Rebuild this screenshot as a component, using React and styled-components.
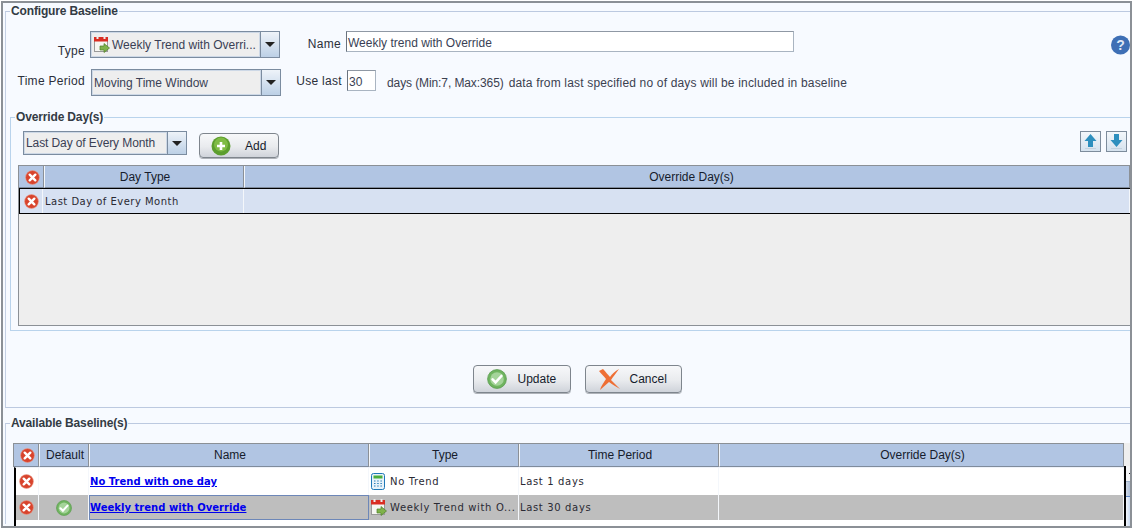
import React from "react";
import styled, { createGlobalStyle } from "styled-components";

const Global = createGlobalStyle`
  html, body { margin: 0; padding: 0; background: #fff; overflow: hidden; }
  * { box-sizing: border-box; }
`;

const Page = styled.div`
  width: 1133px;
  height: 528px;
  padding: 1px 1px 0 1px;
  font-family: "Liberation Sans", Arial, sans-serif;
  font-size: 12px;
  color: #2b2f3a;
`;

const Win = styled.div`
  height: 527px;
  border: 2px solid #8b9096;
  background: #f7faff;
  display: flex;
  flex-direction: column;
  padding: 1px 0 0 2px;
  overflow: hidden;
`;

const Group = styled.fieldset`
  margin: ${(p) => p.$mt || 0}px 0 0;
  padding: 0;
  min-width: 0;
  border: 0;
  border-top: 1px solid #bcc9e0;
  border-left: 1px solid #c4d0e4;
  border-bottom: ${(p) => (p.$closed ? "1px solid #bcc9e0" : "0")};
  height: ${(p) => p.$h}px;
  flex: none;
`;

const Legend = styled.legend`
  margin-left: 4px;
  padding: 0 1px;
  font-weight: bold;
  font-size: 12px;
  line-height: 14px;
  letter-spacing: -0.15px;
  color: #333b44;
`;

const InnerGroup = styled.fieldset`
  margin: 0 0 0 4px;
  padding: 0;
  min-width: 0;
  border: 1px solid #b9d3ec;
  border-right: 0;
  height: 221px;
  flex: none;
`;

const Row = styled.div`
  display: flex;
  align-items: flex-start;
  height: ${(p) => p.$h}px;
  margin-top: ${(p) => p.$mt || 0}px;
`;

const Label = styled.span`
  flex: none;
  width: ${(p) => p.$w}px;
  margin-top: ${(p) => p.$top || 0}px;
  margin-right: ${(p) => p.$mr || 0}px;
  text-align: right;
  line-height: 14px;
  letter-spacing: 0.3px;
  white-space: nowrap;
`;

const Combo = styled.div`
  flex: none;
  display: flex;
  width: ${(p) => p.$w}px;
  height: ${(p) => p.$h}px;
  margin-left: ${(p) => p.$ml || 0}px;
  border: 1px solid #7b8ca0;
  background: #eeeeee;
`;

const ComboText = styled.div`
  flex: 1;
  min-width: 0;
  display: flex;
  align-items: center;
  gap: ${(p) => p.$gap || 0}px;
  padding-left: ${(p) => p.$pl || 1}px;
  border: 1px solid #cdd8e6;
  white-space: nowrap;
  overflow: hidden;
  letter-spacing: ${(p) => p.$ls || 0}px;
  color: #3a3f55;
`;

const ComboArrow = styled.div`
  flex: none;
  width: 19px;
  display: flex;
  align-items: center;
  justify-content: center;
  border-left: 1px solid #7b8ca0;
  background: linear-gradient(#eef3f9, #bcd0e6);
  &::after {
    content: "";
    border-left: 5px solid transparent;
    border-right: 5px solid transparent;
    border-top: 5px solid #222;
  }
`;

const TextBox = styled.div`
  flex: none;
  width: ${(p) => p.$w}px;
  height: 21px;
  margin-top: ${(p) => p.$mt || 0}px;
  padding: 0 1px;
  border: 1px solid #a9b4c1;
  border-left-color: #69727e;
  border-top-color: #8f98a4;
  background: #fff;
  line-height: 22px;
  color: #3a3f55;
  white-space: nowrap;
`;

const Hint = styled.span`
  flex: none;
  margin-left: ${(p) => p.$ml}px;
  margin-top: 7px;
  line-height: 14px;
  letter-spacing: ${(p) => p.$ls || 0}px;
  color: #3b4150;
  white-space: nowrap;
`;

const Spacer = styled.div`
  flex: 1;
`;

const Toolbar = styled.div`
  display: flex;
  align-items: flex-start;
  height: 41px;
  padding: 7px 3px 0 12px;
`;

const Raised = styled.div`
  flex: none;
  display: flex;
  align-items: center;
  width: ${(p) => p.$w}px;
  height: ${(p) => p.$h}px;
  margin-left: ${(p) => p.$ml || 0}px;
  margin-top: ${(p) => p.$mt || 0}px;
  padding-left: ${(p) => p.$pl}px;
  gap: ${(p) => p.$gap}px;
  border: 1px solid #7e858d;
  border-radius: 4px;
  background: linear-gradient(#f7f8fa, #e9ebee 55%, #cfd3da);
  box-shadow: 0 1px 0 #aeb2b8;
  color: #161c2c;
  line-height: 14px;
`;

const IconBtn = styled.div`
  flex: none;
  width: 21px;
  height: 21px;
  margin-left: ${(p) => p.$ml || 0}px;
  border: 1px solid #7d8c9c;
  background: linear-gradient(#f3f7fb, #d5e2ee);
  display: flex;
  align-items: center;
  justify-content: center;
`;

const Table = styled.div`
  flex: none;
  height: ${(p) => p.$h}px;
  margin-left: ${(p) => p.$ml}px;
  border-top: 1px solid #8b9096;
  background: ${(p) => p.$bg};
  border-bottom: ${(p) => (p.$bb ? "1px solid #8b9096" : "0")};
  border-left: 1px solid #8b9096;
  overflow: hidden;
`;

const Tr = styled.div`
  display: grid;
  grid-template-columns: ${(p) => p.$cols};
  height: ${(p) => p.$h}px;
  background: ${(p) => p.$bg || "transparent"};
`;

const HeadCell = styled.div`
  display: flex;
  align-items: center;
  justify-content: center;
  min-width: 0;
  padding-left: ${(p) => p.$pl ?? 2}px;
  padding-top: ${(p) => p.$pt || 0}px;
  background: #b1c5e3;
  border-right: 1px solid #8b9096;
  border-left: 1px solid #f4f7fb;
  border-bottom: 1px solid #7f8b9c;
  color: #161c2c;
  white-space: nowrap;
  &:first-child { border-left: 0; }
`;

const SelRow = styled.div`
  display: grid;
  grid-template-columns: 23px 201px 1fr;
  height: 26px;
  border: solid #000;
  border-width: 1px 0 1px 1px;
  background: #d7e1f2;
`;

const Cell = styled.div`
  display: flex;
  align-items: center;
  justify-content: ${(p) => (p.$center ? "center" : "flex-start")};
  gap: ${(p) => p.$gap ?? 3}px;
  min-width: 0;
  padding-left: ${(p) => p.$pl || 0}px;
  padding-right: ${(p) => p.$pr || 0}px;
  font-family: "DejaVu Sans", Verdana, sans-serif;
  font-size: 10px;
  letter-spacing: ${(p) => p.$ls ?? 0.65}px;
  color: #2a2a33;
  white-space: nowrap;
  overflow: hidden;
  border-right: 1px solid #f4f7fb;
`;

const LinkCell = styled(Cell)`
  letter-spacing: 0.03px;
  border: ${(p) => (p.$focus ? "1px solid #6d87b8" : "0")};
  border-right: 1px solid ${(p) => (p.$focus ? "#6d87b8" : "#f4f7fb")};
`;

const TLink = styled.a`
  color: #0000ee;
  font-weight: bold;
  text-decoration: underline;
`;

const ButtonBar = styled.div`
  display: flex;
  justify-content: center;
  gap: 14px;
  padding: 34px 0 0 18px;
`;

const Bottom = styled.div`
  display: flex;
  height: 84px;
  margin: 13px 0 0 7px;
`;

const BottomMain = styled.div`
  width: 1111px;
  flex: none;
`;

const Rows = styled.div`
  margin-left: 1px;
  border-left: 2px solid #000;
  border-top: 1px solid #eef2f9;
  height: 59px;
  background: #fff;
`;

const ScrollColumn = styled.div`
  flex: none;
  width: 6px;
  height: 84px;
  padding-top: 23px;
  background: #eeeeee;
`;

const ScrollBody = styled.div`
  height: 60px;
  border-left: 2px solid #000;
  background: linear-gradient(90deg, #f2f5fa, #c9daf2);
`;

const ScrollButton = styled.div`
  height: 15px;
  background: #f4f5f7;
  position: relative;
  &::after {
    content: "";
    position: absolute;
    right: 0;
    top: 7px;
    width: 1px;
    height: 1px;
    background: #222;
  }
`;

const ScrollThumb = styled.div`
  height: 16px;
  background: linear-gradient(90deg, #cfd8e6, #aebfd8);
  border-top: 1px solid #9db0c9;
  border-bottom: 1px solid #5f86c4;
`;

const CloseIcon = () => (
  <svg width="15" height="15" viewBox="0 0 16 16">
    <circle cx="8" cy="8" r="7.4" fill="#d8432c" stroke="#eda08f" strokeWidth=".6" />
    <path d="M5 5l6 6M11 5l-6 6" stroke="#fff" strokeWidth="2.6" strokeLinecap="round" />
  </svg>
);

const CheckIcon = ({ s = 16 }) => (
  <svg width={s} height={s} viewBox="0 0 20 20">
    <circle cx="10" cy="10" r="9.4" fill="#6fb45f" stroke="#5b9c50" strokeWidth=".8" />
    <circle cx="10" cy="10" r="6.8" fill="#a5d49a" />
    <path d="M5.6 10.4l3 3 5.8-6.4" fill="none" stroke="#fff" strokeWidth="2.6" strokeLinecap="round" />
  </svg>
);

const PlusIcon = () => (
  <svg width="20" height="20" viewBox="0 0 20 20">
    <circle cx="10" cy="10" r="9.5" fill="#5c9e2e" />
    <circle cx="10" cy="8.6" r="7" fill="#7fbb45" />
    <path d="M10 6v8M6 10h8" stroke="#fff" strokeWidth="2.6" />
  </svg>
);

const CancelIcon = () => (
  <svg width="21" height="21" viewBox="0 0 21 21">
    <path d="M0 2L4 0C7 3 9 6 11 8C13 5 16 2 20 0C17 4 14 8 12 11C15 14 18 17 21 20C17 18 13 15 10 13C7 16 4 18 1 21C2 17 5 13 7 10C5 7 2 5 0 2z" fill="#ee6f35" />
  </svg>
);

const CalendarIcon = () => (
  <svg width="16" height="18" viewBox="0 0 16 18">
    <rect x="0.5" y="1.5" width="13" height="14" fill="#f6f6f2" stroke="#999" />
    <rect x="0" y="1" width="14" height="4.5" fill="#d92d22" />
    <rect x="2.5" y="0" width="2" height="3" fill="#eee" />
    <rect x="9.5" y="0" width="2" height="3" fill="#eee" />
    <path d="M6 10h4V7.5l5.5 4.5-5.5 4.5V14H6z" fill="#7fb24a" stroke="#4f7f2a" strokeWidth=".7" />
  </svg>
);

const CalcIcon = () => (
  <svg width="14" height="17" viewBox="0 0 14 17">
    <rect x="0.5" y="0.5" width="13" height="16" rx="2" fill="#e7f2fa" stroke="#1e78b8" />
    <rect x="2.5" y="2.5" width="9" height="3" fill="#4caf3c" />
    <path d="M3 8h1.5M6.2 8h1.5M9.4 8h1.5M3 10.5h1.5M6.2 10.5h1.5M9.4 10.5h1.5M3 13h1.5M6.2 13h1.5M9.4 13h1.5" stroke="#2d7fb8" strokeWidth="1.2" />
  </svg>
);

const HelpIcon = () => (
  <svg width="19" height="20" viewBox="0 0 19 20">
    <circle cx="9.5" cy="10" r="9.5" fill="#3e6fb5" />
    <text x="9.5" y="15" textAnchor="middle" fontFamily="Liberation Sans" fontWeight="bold" fontSize="14" fill="#dfe8f5">?</text>
  </svg>
);

const ArrowIcon = ({ down }) => (
  <svg width="13" height="15" viewBox="0 0 13 15">
    <g transform={down ? "" : "rotate(180 6.5 6.5)"}>
      <path d="M4 0h5v6h3.5L6.5 13 .5 6h3.5z" fill="#2e8fbe" />
    </g>
    <rect x="1" y="14" width="11" height="1" fill="#c3d2df" />
  </svg>
);

const HelpSlot = styled.div`
  flex: none;
  margin-top: 4px;
  display: flex;
`;

const OverCols = "25px 200px 1fr";
const BaseCols = "25px 50px 280px 150px 200px 1fr";
const RowCols = "23px 50px 280px 150px 200px 1fr";

export default function App() {
  return (
    <Page>
      <Global />
      <Win>
        <Group $h={404} $closed>
          <Legend>Configure Baseline</Legend>
          <Row $h={38} $mt={13}>
            <Label $w={79} $top={13}>Type</Label>
            <Combo $w={190} $h={27} $ml={5}>
              <ComboText $pl={2} $gap={2}><CalendarIcon /><span>Weekly Trend with Overri...</span></ComboText>
              <ComboArrow />
            </Combo>
            <Label $w={61} $top={6} $mr={5}>Name</Label>
            <TextBox $w={448}>Weekly trend with Override</TextBox>
            <Spacer />
            <HelpSlot><HelpIcon /></HelpSlot>
          </Row>
          <Row $h={41}>
            <Label $w={79} $top={5}>Time Period</Label>
            <Combo $w={190} $h={27} $ml={6}>
              <ComboText $pl={1}><span>Moving Time Window</span></ComboText>
              <ComboArrow />
            </Combo>
            <Label $w={61} $top={5} $mr={5}>Use last</Label>
            <TextBox $w={29} $mt={1}>30</TextBox>
            <Hint $ml={11} $ls={-0.1}>days (Min:7, Max:365)</Hint>
            <Hint $ml={5} $ls={0.17}>data from last specified no of days will be included in baseline</Hint>
          </Row>
          <InnerGroup>
            <Legend>Override Day(s)</Legend>
            <Toolbar>
              <Combo $w={164} $h={24}>
                <ComboText $pl={1} $ls={-0.1}><span>Last Day of Every Month</span></ComboText>
                <ComboArrow />
              </Combo>
              <Raised $w={80} $h={25} $ml={12} $mt={2} $pl={11} $gap={14}>
                <PlusIcon /><span>Add</span>
              </Raised>
              <Spacer />
              <IconBtn><ArrowIcon /></IconBtn>
              <IconBtn $ml={5}><ArrowIcon down /></IconBtn>
            </Toolbar>
            <Table $h={161} $ml={7} $bg="#eeeeee" $bb>
              <Tr $cols={OverCols} $h={22}>
                <HeadCell $pt={1}><CloseIcon /></HeadCell>
                <HeadCell $pt={1}>Day Type</HeadCell>
                <HeadCell $pt={1} $pl={9}>Override Day(s)</HeadCell>
              </Tr>
              <SelRow>
                <Cell $center><CloseIcon /></Cell>
                <Cell $pl={2} $ls={0.48}>Last Day of Every Month</Cell>
                <Cell />
              </SelRow>
            </Table>
          </InnerGroup>
          <ButtonBar>
            <Raised $w={98} $h={28} $pl={13} $gap={11}><CheckIcon s={20} /><span>Update</span></Raised>
            <Raised $w={97} $h={28} $pl={13} $gap={10}><CancelIcon /><span>Cancel</span></Raised>
          </ButtonBar>
        </Group>
        <Group $h={108} $mt={8}>
          <Legend>Available Baseline(s)</Legend>
          <Bottom>
            <BottomMain>
              <Table $h={24} $ml={0} $bg="transparent">
                <Tr $cols={BaseCols} $h={23}>
                  <HeadCell><CloseIcon /></HeadCell>
                  <HeadCell>Default</HeadCell>
                  <HeadCell>Name</HeadCell>
                  <HeadCell>Type</HeadCell>
                  <HeadCell>Time Period</HeadCell>
                  <HeadCell>Override Day(s)</HeadCell>
                </Tr>
              </Table>
              <Rows>
                <Tr $cols={RowCols} $h={27} $bg="#ffffff">
                  <Cell $center $pr={2}><CloseIcon /></Cell>
                  <Cell />
                  <LinkCell $pl={1}><TLink>No Trend with one day</TLink></LinkCell>
                  <Cell $pl={2} $gap={5}><CalcIcon /><span>No Trend</span></Cell>
                  <Cell $pl={1}>Last 1 days</Cell>
                  <Cell />
                </Tr>
                <Tr $cols={RowCols} $h={25} $bg="#bebebe">
                  <Cell $center $pr={2}><CloseIcon /></Cell>
                  <Cell $center><CheckIcon /></Cell>
                  <LinkCell $focus><TLink>Weekly trend with Override</TLink></LinkCell>
                  <Cell $pl={2}><CalendarIcon /><span>Weekly Trend with O...</span></Cell>
                  <Cell $pl={1}>Last 30 days</Cell>
                  <Cell />
                </Tr>
              </Rows>
            </BottomMain>
            <ScrollColumn>
              <ScrollBody>
                <ScrollButton />
                <ScrollThumb />
              </ScrollBody>
            </ScrollColumn>
          </Bottom>
        </Group>
      </Win>
    </Page>
  );
}
